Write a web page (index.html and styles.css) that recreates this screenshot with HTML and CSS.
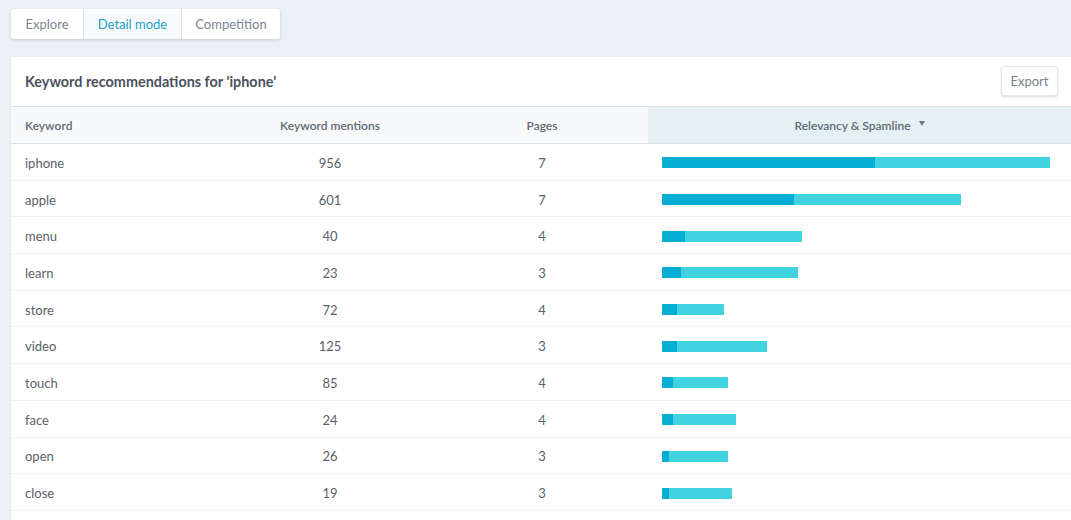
FILE: index.html
```html
<!DOCTYPE html>
<html>
<head>
<meta charset="utf-8">
<link rel="stylesheet" href="styles.css">
</head>
<body>
<div class="page">
  <div class="tabs">
    <div class="tab tab-explore">Explore</div>
    <div class="tab tab-detail active">Detail mode</div>
    <div class="tab tab-comp">Competition</div>
  </div>
  <div class="card">
    <div class="card-head">
      <div class="title">Keyword recommendations for 'iphone'</div>
      <button class="export">Export</button>
    </div>
    <div class="table">
      <div class="row head">
        <div class="c c1">Keyword</div>
        <div class="c c2">Keyword mentions</div>
        <div class="c c3">Pages</div>
        <div class="c c4 sorted">Relevancy &amp; Spamline <span class="arrow"></span></div>
      </div>
      <div class="row"><div class="c c1">iphone</div><div class="c c2">956</div><div class="c c3">7</div><div class="c c4"><div class="bar" style="width:388px"><div class="dark" style="width:213px"></div></div></div></div>
      <div class="row"><div class="c c1">apple</div><div class="c c2">601</div><div class="c c3">7</div><div class="c c4"><div class="bar" style="width:299px"><div class="dark" style="width:132px"></div></div></div></div>
      <div class="row"><div class="c c1">menu</div><div class="c c2">40</div><div class="c c3">4</div><div class="c c4"><div class="bar" style="width:140px"><div class="dark" style="width:23px"></div></div></div></div>
      <div class="row"><div class="c c1">learn</div><div class="c c2">23</div><div class="c c3">3</div><div class="c c4"><div class="bar" style="width:136px"><div class="dark" style="width:19px"></div></div></div></div>
      <div class="row"><div class="c c1">store</div><div class="c c2">72</div><div class="c c3">4</div><div class="c c4"><div class="bar" style="width:62px"><div class="dark" style="width:15px"></div></div></div></div>
      <div class="row"><div class="c c1">video</div><div class="c c2">125</div><div class="c c3">3</div><div class="c c4"><div class="bar" style="width:105px"><div class="dark" style="width:15px"></div></div></div></div>
      <div class="row"><div class="c c1">touch</div><div class="c c2">85</div><div class="c c3">4</div><div class="c c4"><div class="bar" style="width:66px"><div class="dark" style="width:11px"></div></div></div></div>
      <div class="row"><div class="c c1">face</div><div class="c c2">24</div><div class="c c3">4</div><div class="c c4"><div class="bar" style="width:74px"><div class="dark" style="width:11px"></div></div></div></div>
      <div class="row"><div class="c c1">open</div><div class="c c2">26</div><div class="c c3">3</div><div class="c c4"><div class="bar" style="width:66px"><div class="dark" style="width:7px"></div></div></div></div>
      <div class="row"><div class="c c1">close</div><div class="c c2">19</div><div class="c c3">3</div><div class="c c4"><div class="bar" style="width:70px"><div class="dark" style="width:7px"></div></div></div></div>
    </div>
  </div>
</div>
</body>
</html>
```

FILE: styles.css
```css
html, body {
  margin: 0;
  padding: 0;
  background: #ebf2f6;
  font-family: Lato, "Open Sans", sans-serif;
  color: #5a626c;
  overflow: hidden;
}
.page {
  padding: 9px 0 0 11px;
  height: 520px;
  box-sizing: border-box;
  overflow: hidden;
  display: flex;
  flex-direction: column;
  align-items: flex-start;
}
.tabs {
  display: inline-flex;
  height: 30px;
  flex-shrink: 0;
  background: #fff;
  border-radius: 3px;
  box-shadow: 0 1px 3px rgba(40, 60, 80, 0.22);
}
.tab {
  display: flex;
  align-items: center;
  justify-content: center;
  font-size: 13px;
  color: #7c8692;
  box-sizing: border-box;
}
.tab-explore { width: 72px; }
.tab-detail { width: 99px; }
.tab-comp { width: 98px; }
.tab.active {
  color: #1ca2c9;
  background: #f8fafc;
  border-left: 1px solid #dde3e8;
  border-right: 1px solid #dde3e8;
}
.card {
  margin-top: 18px;
  align-self: stretch;
  flex: 1;
  background: #fff;
  box-shadow: 0 0 2px rgba(40, 60, 80, 0.08);
}
.card-head {
  height: 49px;
  display: flex;
  align-items: center;
  justify-content: space-between;
  padding: 0 13px 0 14px;
  border-bottom: 1px solid #dbe3e8;
}
.title {
  font-size: 14.4px;
  font-weight: 700;
  color: #4a525d;
}
.export {
  font-family: inherit;
  font-size: 13px;
  color: #78828d;
  background: #fff;
  border: 1px solid #e3e7ea;
  border-radius: 3px;
  height: 30px;
  width: 57px;
  padding: 0;
  box-shadow: 0 1px 2px rgba(40, 60, 80, 0.18);
  margin-top: -1px;
}
.row {
  display: grid;
  grid-template-columns: 213px 212px 212px 1fr;
  height: 36.7px;
  padding-top: 2px;
  border-bottom: 1px solid #f0f2f4;
  box-sizing: border-box;
  font-size: 13px;
  color: #59616b;
}
.row.head {
  height: 37px;
  padding-top: 0;
  background: #f7f9fb;
  border-bottom: 1px solid #dbe3e8;
  font-size: 12px;
  font-weight: 600;
  color: #5f6974;
}
.c {
  display: flex;
  align-items: center;
}
.c1 { padding-left: 14px; }
.c2, .c3 { justify-content: center; }
.row.head .c4 {
  justify-content: center;
  background: #e5f0f5;
  padding-left: 0;
}
.c4 { padding-left: 14px; }
.arrow {
  display: inline-block;
  width: 0;
  height: 0;
  border-left: 3.5px solid transparent;
  border-right: 3.5px solid transparent;
  border-top: 5px solid #6c7682;
  margin-left: 8px;
  margin-top: -3px;
}
.bar {
  height: 11px;
  background: #41d3e0;
  display: flex;
}
.dark {
  height: 100%;
  background: #06aed5;
}
```
